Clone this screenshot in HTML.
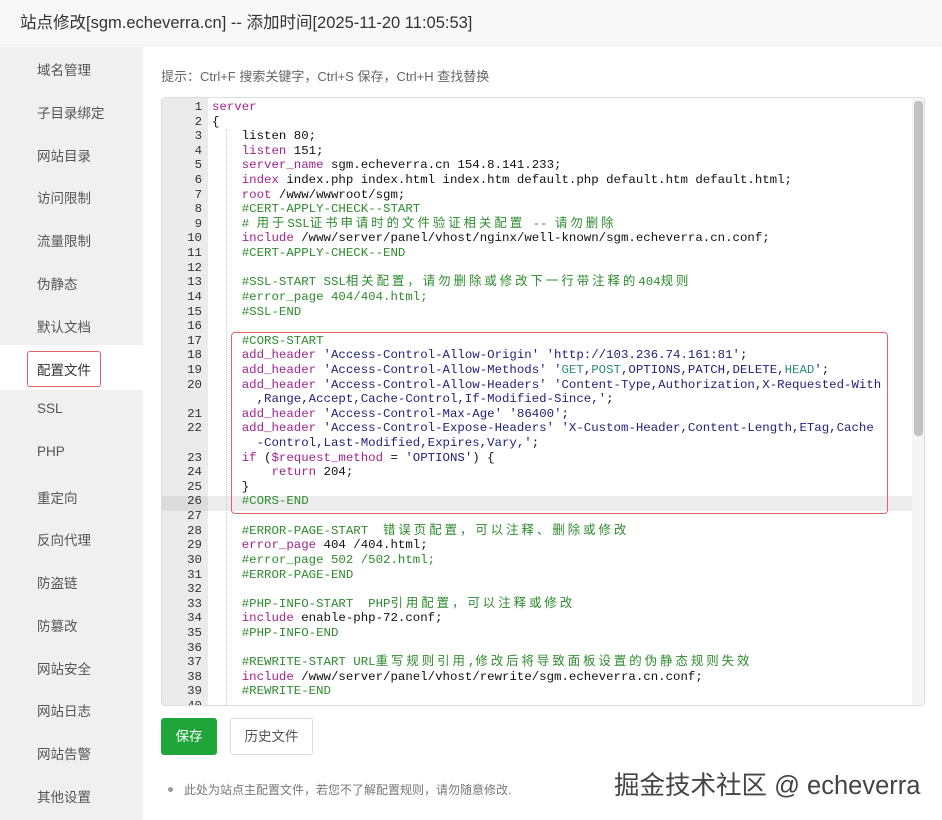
<!DOCTYPE html>
<html><head><meta charset="utf-8"><style>
*{margin:0;padding:0;box-sizing:border-box}
body{width:942px;height:820px;overflow:hidden;background:#fff;font-family:"Liberation Sans","Noto Sans CJK SC",sans-serif;position:relative}
.title{position:absolute;left:0;top:0;width:942px;height:46px;background:#f8f8f8;border-bottom:1px solid #eee;font-size:16.5px;color:#333;line-height:46px;padding-left:20px}
.side{position:absolute;left:0;top:47px;width:143px;height:773px;background:#f0f0f0}
.act{position:absolute;left:0;top:345px;width:143px;height:45px;background:#fff}
.redbox{position:absolute;left:27px;top:351px;width:74px;height:36px;border:1.5px solid #e06666;border-radius:3px}
.si{position:absolute;left:37px;font-size:13.5px;color:#555;white-space:nowrap}
.tip{position:absolute;left:161px;top:66px;font-size:13px;color:#666}
.ed{position:absolute;left:161px;top:97px;width:764px;height:609px;border:1px solid #ddd;border-radius:4px;overflow:hidden;background:#fff}
.gut{position:absolute;left:0;top:0;width:46px;height:100%;background:#ebebeb}
.hl{position:absolute;left:46px;width:704px;height:15px;background:#ededed}
.hlg{position:absolute;left:0;width:46px;height:15px;background:#dcdcdc}
.pre{position:absolute;top:2px;font-family:"Liberation Mono","Noto Sans CJK SC",monospace;font-size:12.4px;color:#111}
.pre div{height:14.62px;line-height:14.62px;white-space:pre;overflow:visible}
.nums{left:0;width:40px;text-align:right;color:#333}
.code{left:50px}
.k{color:#a2238f}.c{color:#2e8b2e}.s{color:#22227a}.t{color:#2a8a7a}
.z{letter-spacing:3px}
.guide{position:absolute;left:64px;border-left:1px dotted #ccc}
.scroll{position:absolute;left:750px;top:0;width:14px;height:100%;background:#f5f5f5}
.thumb{position:absolute;left:2px;top:3px;width:9px;height:335px;background:#c1c1c1;border-radius:4px}
.cors{position:absolute;left:231px;top:332px;width:657px;height:182px;border:1.5px solid #e06666;border-radius:4px}
.btn1{position:absolute;left:161px;top:718px;width:56px;height:37px;background:#20a53a;color:#fff;font-size:13.5px;line-height:37px;text-align:center;border-radius:3px}
.btn2{position:absolute;left:230px;top:718px;width:83px;height:37px;border:1px solid #ddd;color:#555;font-size:13.5px;line-height:35px;text-align:center;border-radius:3px}
.note{position:absolute;left:184px;top:781px;font-size:12px;color:#777}
.dot{position:absolute;left:168px;top:787px;width:5px;height:5px;border-radius:50%;background:#999}
.wm{position:absolute;left:614px;top:765px;font-size:25.5px;color:#444;text-shadow:0 0 2px #fff,0 0 2px #fff}
</style></head><body>
<div class="title">站点修改[sgm.echeverra.cn] -- 添加时间[2025-11-20 11:05:53]</div>
<div class="side"></div>
<div class="act"></div>
<div class="redbox"></div>
<div class="si" style="top:59px">域名管理</div>
<div class="si" style="top:102px">子目录绑定</div>
<div class="si" style="top:145px">网站目录</div>
<div class="si" style="top:187px">访问限制</div>
<div class="si" style="top:230px">流量限制</div>
<div class="si" style="top:273px">伪静态</div>
<div class="si" style="top:316px">默认文档</div>
<div class="si" style="top:359px;color:#333">配置文件</div>
<div class="si" style="top:401px">SSL</div>
<div class="si" style="top:444px">PHP</div>
<div class="si" style="top:487px">重定向</div>
<div class="si" style="top:529px">反向代理</div>
<div class="si" style="top:572px">防盗链</div>
<div class="si" style="top:615px">防篡改</div>
<div class="si" style="top:658px">网站安全</div>
<div class="si" style="top:700px">网站日志</div>
<div class="si" style="top:743px">网站告警</div>
<div class="si" style="top:786px">其他设置</div>
<div class="tip">提示：Ctrl+F 搜索关键字，Ctrl+S 保存，Ctrl+H 查找替换</div>
<div class="ed">
<div class="gut"></div>
<div class="hlg" style="top:398px"></div>
<div class="hl" style="top:398px"></div>
<div class="guide" style="top:31px;height:580px"></div>
<div class="pre nums">
<div>1</div><div>2</div><div>3</div><div>4</div><div>5</div><div>6</div><div>7</div><div>8</div><div>9</div><div>10</div>
<div>11</div><div>12</div><div>13</div><div>14</div><div>15</div><div>16</div><div>17</div><div>18</div><div>19</div><div>20</div>
<div></div><div>21</div><div>22</div><div></div><div>23</div><div>24</div><div>25</div><div>26</div><div>27</div><div>28</div>
<div>29</div><div>30</div><div>31</div><div>32</div><div>33</div><div>34</div><div>35</div><div>36</div><div>37</div><div>38</div>
<div>39</div><div>40</div>
</div>
<div class="pre code">
<div><span class="k">server</span></div>
<div>{</div>
<div>    listen 80;</div>
<div>    <span class="k">listen</span> 151;</div>
<div>    <span class="k">server_name</span> sgm.echeverra.cn 154.8.141.233;</div>
<div>    <span class="k">index</span> index.php index.html index.htm default.php default.htm default.html;</div>
<div>    <span class="k">root</span> /www/wwwroot/sgm;</div>
<div>    <span class="c">#CERT-APPLY-CHECK--START</span></div>
<div>    <span class="c"># <span class="z">用于</span>SSL<span class="z">证书申请时的文件验证相关配置</span> -- <span class="z">请勿删除</span></span></div>
<div>    <span class="k">include</span> /www/server/panel/vhost/nginx/well-known/sgm.echeverra.cn.conf;</div>
<div>    <span class="c">#CERT-APPLY-CHECK--END</span></div>
<div></div>
<div>    <span class="c">#SSL-START SSL<span class="z">相关配置，请勿删除或修改下一行带注释的</span>404<span class="z">规则</span></span></div>
<div>    <span class="c">#error_page 404/404.html;</span></div>
<div>    <span class="c">#SSL-END</span></div>
<div></div>
<div>    <span class="c">#CORS-START</span></div>
<div>    <span class="k">add_header</span> <span class="s">'Access-Control-Allow-Origin'</span> <span class="s">'http://103.236.74.161:81'</span>;</div>
<div>    <span class="k">add_header</span> <span class="s">'Access-Control-Allow-Methods'</span> <span class="s">'<span class="t">GET</span>,<span class="t">POST</span>,OPTIONS,PATCH,DELETE,<span class="t">HEAD</span>'</span>;</div>
<div>    <span class="k">add_header</span> <span class="s">'Access-Control-Allow-Headers'</span> <span class="s">'Content-Type,Authorization,X-Requested-With</span></div>
<div><span class="s">      ,Range,Accept,Cache-Control,If-Modified-Since,'</span>;</div>
<div>    <span class="k">add_header</span> <span class="s">'Access-Control-Max-Age'</span> <span class="s">'86400'</span>;</div>
<div>    <span class="k">add_header</span> <span class="s">'Access-Control-Expose-Headers'</span> <span class="s">'X-Custom-Header,Content-Length,ETag,Cache</span></div>
<div><span class="s">      -Control,Last-Modified,Expires,Vary,'</span>;</div>
<div>    <span class="k">if</span> (<span class="k">$request_method</span> = <span class="s">'OPTIONS'</span>) {</div>
<div>        <span class="k">return</span> 204;</div>
<div>    }</div>
<div>    <span class="c">#CORS-END</span></div>
<div></div>
<div>    <span class="c">#ERROR-PAGE-START  <span class="z">错误页配置，可以注释、删除或修改</span></span></div>
<div>    <span class="k">error_page</span> 404 /404.html;</div>
<div>    <span class="c">#error_page 502 /502.html;</span></div>
<div>    <span class="c">#ERROR-PAGE-END</span></div>
<div></div>
<div>    <span class="c">#PHP-INFO-START  PHP<span class="z">引用配置，可以注释或修改</span></span></div>
<div>    <span class="k">include</span> enable-php-72.conf;</div>
<div>    <span class="c">#PHP-INFO-END</span></div>
<div></div>
<div>    <span class="c">#REWRITE-START URL<span class="z">重写规则引用</span>,<span class="z">修改后将导致面板设置的伪静态规则失效</span></span></div>
<div>    <span class="k">include</span> /www/server/panel/vhost/rewrite/sgm.echeverra.cn.conf;</div>
<div>    <span class="c">#REWRITE-END</span></div>
</div>
<div class="scroll"><div class="thumb"></div></div>
</div>
<div class="cors"></div>
<div class="btn1">保存</div>
<div class="btn2">历史文件</div>
<div class="dot"></div>
<div class="note">此处为站点主配置文件，若您不了解配置规则，请勿随意修改.</div>
<div class="wm">掘金技术社区 @ echeverra</div>
</body></html>
